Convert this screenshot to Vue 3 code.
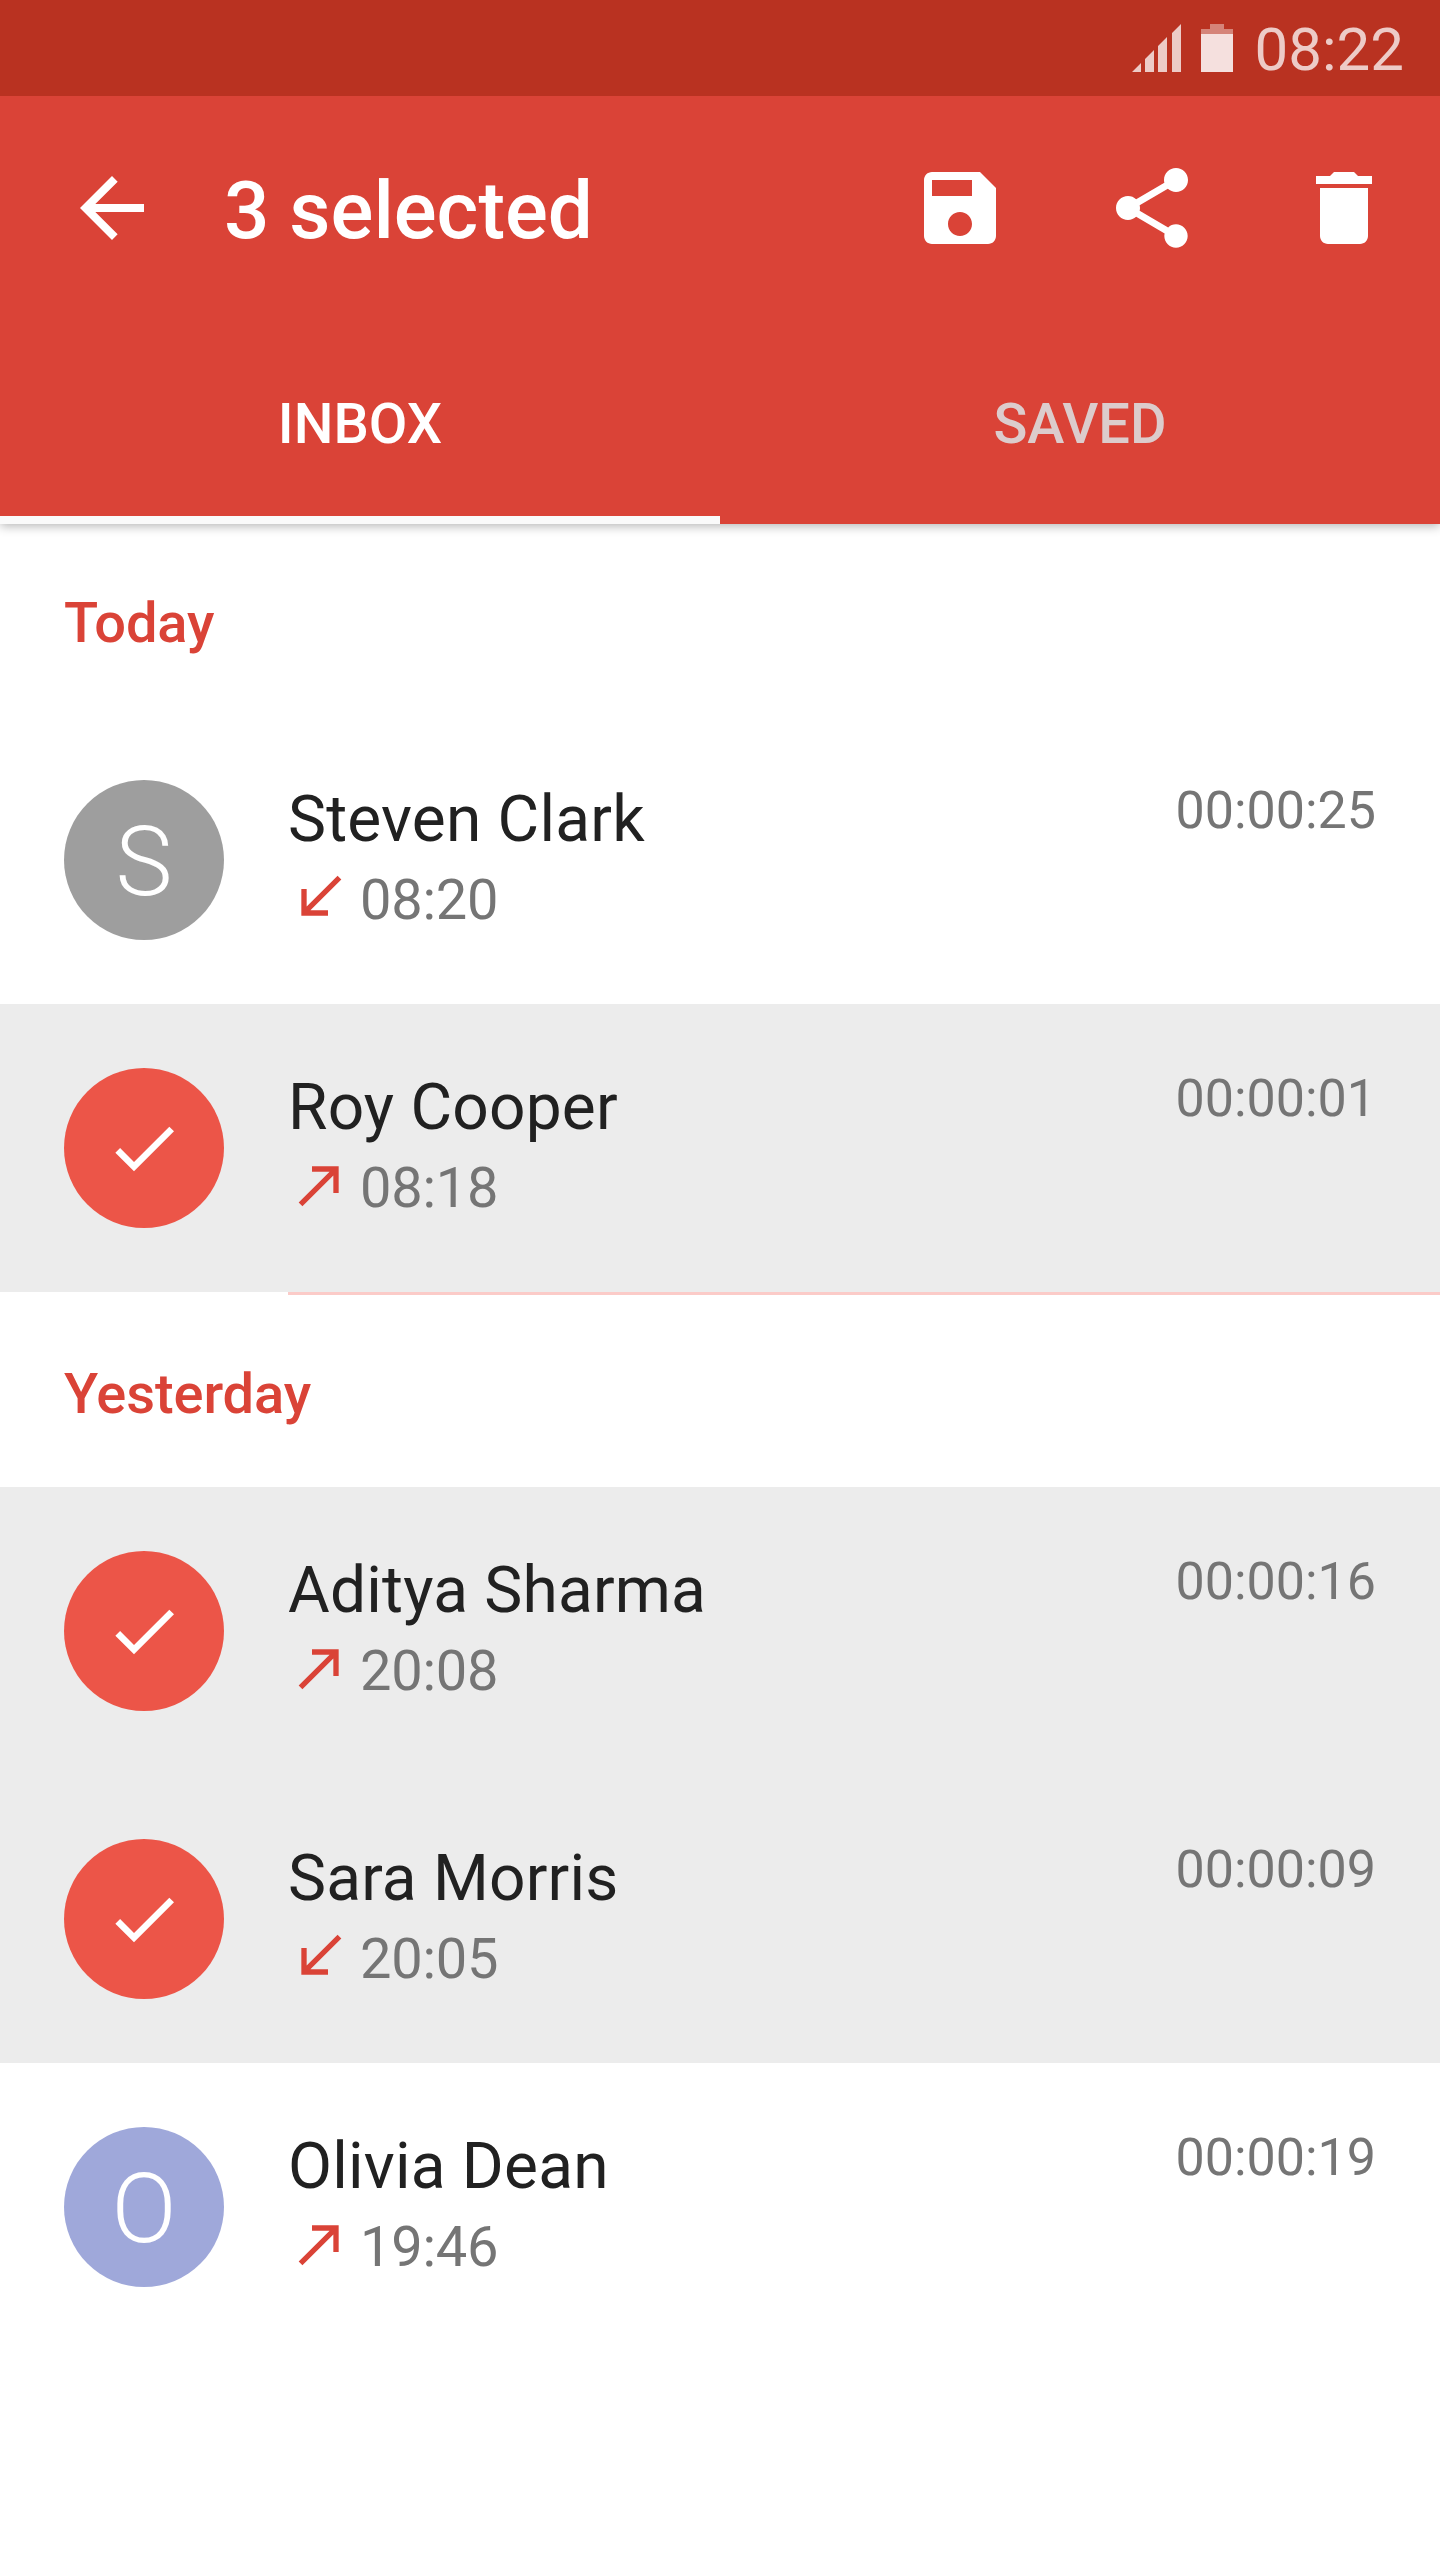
<template>
  <div class="screen">
    <header class="appbar">
      <div class="status-bar">
        <svg class="signal" width="49" height="48" viewBox="0 0 49 48">
          <path d="M0 48L9 39V48ZM13 35L22 26V48H13ZM26 22L35 13V48H26ZM40 9L49 0V48H40Z" />
        </svg>
        <svg class="battery" width="32" height="48" viewBox="0 0 32 48">
          <path opacity="0.4" d="M9 0H23V5H32V10H0V5H9Z" />
          <path opacity="0.85" d="M0 10H32V48H0Z" />
        </svg>
        <span class="clock">08:22</span>
      </div>
      <div class="toolbar">
        <button class="icon-btn back">
          <svg viewBox="0 0 24 24"><path d="M20 11H7.83l5.59-5.59L12 4l-8 8 8 8 1.41-1.41L7.83 13H20v-2z" /></svg>
        </button>
        <h1 class="title">3 selected</h1>
        <button class="icon-btn">
          <svg viewBox="0 0 24 24"><path d="M17 3H5c-1.11 0-2 .9-2 2v14c0 1.1.89 2 2 2h14c1.1 0 2-.9 2-2V7l-4-4zm-5 16c-1.66 0-3-1.34-3-3s1.34-3 3-3 3 1.34 3 3-1.34 3-3 3zm3-10H5V5h10v4z" /></svg>
        </button>
        <button class="icon-btn">
          <svg viewBox="0 0 24 24"><path d="M18 16.08c-.76 0-1.44.3-1.96.77L8.91 12.7c.05-.23.09-.46.09-.7s-.04-.47-.09-.7l7.05-4.11c.54.5 1.25.81 2.04.81 1.66 0 3-1.34 3-3s-1.34-3-3-3-3 1.34-3 3c0 .24.04.47.09.7L8.04 9.81C7.5 9.31 6.79 9 6 9c-1.66 0-3 1.34-3 3s1.34 3 3 3c.79 0 1.5-.31 2.04-.81l7.12 4.16c-.05.21-.08.43-.08.65 0 1.61 1.31 2.92 2.92 2.92 1.61 0 2.92-1.31 2.92-2.92s-1.31-2.92-2.92-2.92z" /></svg>
        </button>
        <button class="icon-btn">
          <svg viewBox="0 0 24 24"><path d="M6 19c0 1.1.9 2 2 2h8c1.1 0 2-.9 2-2V7H6v12zM19 4h-3.5l-1-1h-5l-1 1H5v2h14V4z" /></svg>
        </button>
      </div>
      <nav class="tabs">
        <div class="tab active">INBOX</div>
        <div class="tab">SAVED</div>
      </nav>
    </header>

    <section v-for="group in groups" :key="group.label">
      <h2 class="group-label">{{ group.label }}</h2>
      <div
        v-for="call in group.calls"
        :key="call.name"
        class="row"
        :class="{ selected: call.selected }"
      >
        <div class="avatar" :class="call.selected ? 'checked' : call.tone">
          <svg v-if="call.selected" class="check" viewBox="0 0 24 24">
            <path d="M9 16.17L4.83 12l-1.42 1.41L9 19 21 7l-1.41-1.41z" />
          </svg>
          <span v-else class="initial">{{ call.name[0] }}</span>
        </div>
        <div class="details">
          <div class="name">{{ call.name }}</div>
          <div class="meta">
            <svg class="direction" viewBox="0 0 24 24">
              <path v-if="call.outgoing" d="M9 5v2h6.59L4 18.59 5.41 20 17 8.41V15h2V5z" />
              <path v-else d="M20 5.41L18.59 4 7 15.59V9H5v10h10v-2H8.41z" />
            </svg>
            <span class="time">{{ call.time }}</span>
          </div>
        </div>
        <div class="duration">{{ call.duration }}</div>
      </div>
      <div v-if="group.divider" class="divider"></div>
    </section>
  </div>
</template>

<script setup>
const groups = [
  {
    label: 'Today',
    divider: true,
    calls: [
      { name: 'Steven Clark', time: '08:20', duration: '00:00:25', outgoing: false, tone: 'grey' },
      { name: 'Roy Cooper', time: '08:18', duration: '00:00:01', outgoing: true, selected: true }
    ]
  },
  {
    label: 'Yesterday',
    calls: [
      { name: 'Aditya Sharma', time: '20:08', duration: '00:00:16', outgoing: true, selected: true },
      { name: 'Sara Morris', time: '20:05', duration: '00:00:09', outgoing: false, selected: true },
      { name: 'Olivia Dean', time: '19:46', duration: '00:00:19', outgoing: true, tone: 'indigo' }
    ]
  }
];
</script>

<style scoped>
.screen {
  width: 1440px;
  min-height: 2560px;
  background: #fff;
  font-family: Roboto, "Liberation Sans", sans-serif;
}

.appbar {
  position: relative;
  background: #da4337;
  box-shadow: 0 2px 10px rgba(0, 0, 0, 0.3);
}

.status-bar {
  height: 96px;
  box-sizing: border-box;
  padding: 24px 36px 0 0;
  display: flex;
  justify-content: flex-end;
  align-items: flex-start;
  background: #b93221;
  color: #fff;
}

.signal {
  fill: rgba(255, 255, 255, 0.75);
  margin-right: 20px;
}

.battery {
  fill: #fff;
  margin-right: 22px;
}

.clock {
  margin-top: 2px;
  font-size: 60px;
  line-height: 48px;
  color: rgba(255, 255, 255, 0.75);
}

.toolbar {
  height: 224px;
  box-sizing: border-box;
  padding: 0 48px 0 64px;
  display: flex;
  align-items: center;
}

.icon-btn {
  width: 96px;
  height: 96px;
  padding: 0;
  border: none;
  background: none;
  margin-left: 96px;
}

.icon-btn.back {
  margin-left: 0;
}

.icon-btn svg {
  display: block;
  width: 96px;
  height: 96px;
  fill: #fff;
}

.title {
  flex: 1;
  margin: 0 0 0 64px;
  padding-top: 6px;
  font-size: 80px;
  font-weight: 500;
  color: #fff;
}

.tabs {
  height: 204px;
  display: flex;
}

.tab {
  flex: 1;
  height: 204px;
  box-sizing: border-box;
  padding-top: 12px;
  border-bottom: 8px solid transparent;
  display: flex;
  align-items: center;
  justify-content: center;
  font-size: 56px;
  font-weight: 500;
  color: #dccccc;
}

.tab.active {
  color: #fff;
  border-bottom-color: #fafafa;
}

.group-label {
  height: 192px;
  box-sizing: border-box;
  margin: 0;
  padding: 6px 0 0 64px;
  display: flex;
  align-items: center;
  font-size: 56px;
  font-weight: 500;
  letter-spacing: -0.1px;
  color: #da4337;
}

.row {
  height: 288px;
  box-sizing: border-box;
  padding: 64px 64px 0;
  display: flex;
  align-items: flex-start;
}

.row.selected {
  background: #ececec;
}

.avatar {
  width: 160px;
  height: 160px;
  flex-shrink: 0;
  border-radius: 50%;
  display: flex;
  align-items: center;
  justify-content: center;
  font-size: 96px;
  font-weight: 300;
  color: #fff;
}

.initial {
  margin-top: 3px;
}

.avatar.grey {
  background: #9e9e9e;
}

.avatar.indigo {
  background: #9fa8da;
}

.avatar.checked {
  background: #ec5548;
}

.check {
  width: 80px;
  height: 80px;
  fill: #fff;
}

.details {
  flex: 1;
  margin-left: 64px;
}

.name {
  font-size: 64px;
  line-height: 80px;
  letter-spacing: 0.2px;
  color: #212121;
}

.meta {
  display: flex;
  align-items: center;
  height: 80px;
}

.direction {
  width: 64px;
  height: 64px;
  margin: 0 8px 6px 0;
  fill: #da4337;
}

.time {
  font-size: 56px;
  letter-spacing: -0.25px;
  color: #757575;
}

.duration {
  margin-top: -1px;
  font-size: 52px;
  line-height: 64px;
  color: #757575;
}

.divider {
  height: 3px;
  margin-left: 288px;
  background: #fbcbc8;
}
</style>
